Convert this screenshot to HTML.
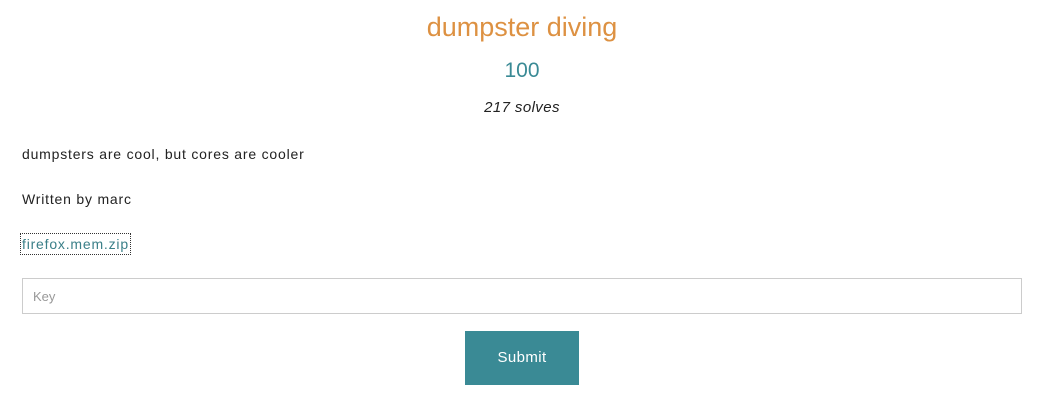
<!DOCTYPE html>
<html><head><meta charset="utf-8"><style>
body{margin:0;background:#fff;font-family:"Liberation Sans",sans-serif;width:1049px;height:404px;position:relative;color:#222;}
.a{position:absolute;white-space:nowrap;}
</style></head><body>
<div class="a" style="left:0;width:1044px;text-align:center;top:12px;font-size:27px;color:#dd9142;">dumpster diving</div>
<div class="a" style="left:0;width:1044px;text-align:center;top:59px;font-size:21px;color:#3a8a95;">100</div>
<div class="a" style="left:0;width:1044px;text-align:center;top:99px;font-size:15px;font-style:italic;color:#222;letter-spacing:0.4px;">217 solves</div>
<div class="a" style="left:22px;top:146px;font-size:14px;letter-spacing:0.8px;">dumpsters are cool, but cores are cooler</div>
<div class="a" style="left:22px;top:191px;font-size:14px;letter-spacing:0.8px;">Written by marc</div>
<div class="a" style="left:21px;top:234px;font-size:14px;color:#3a7f88;outline:1px dotted #333;padding:0 1px;line-height:20px;letter-spacing:0.8px;">firefox.mem.zip</div>
<div class="a" style="left:22px;top:278px;height:36px;border:1px solid #ccc;box-sizing:border-box;width:1000px;"><span style="position:absolute;left:10px;top:10px;font-size:13px;color:#999;">Key</span></div>
<div class="a" style="left:465px;top:331px;width:114px;height:54px;background:#3a8a95;color:#fff;font-size:15px;text-align:center;line-height:54px;letter-spacing:0.4px;">Submit</div>
</body></html>
